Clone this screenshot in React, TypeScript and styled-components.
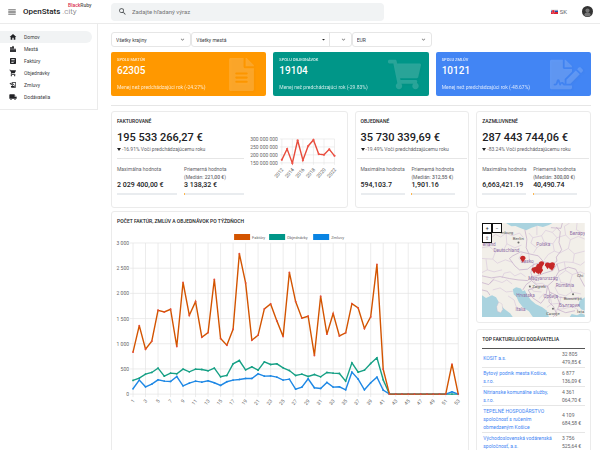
import React from "react";
import styled, { createGlobalStyle } from "styled-components";
import {
  MdMenu,
  MdSearch,
  MdHome,
  MdLocationCity,
  MdArticle,
  MdShoppingCart,
  MdHistoryEdu,
  MdLocalShipping,
  MdExpandMore,
  MdArrowDropDown,
} from "react-icons/md";
import { FaFileAlt, FaShoppingCart, FaFileSignature } from "react-icons/fa";

const GlobalStyle = createGlobalStyle`
  *, *::before, *::after { box-sizing: border-box; }
  body {
    margin: 0;
    background: #fff;
    color: #3c4043;
    font-family: Roboto, "Liberation Sans", sans-serif;
    font-size: 5px;
    line-height: 8px;
  }
  a { text-decoration: none; }
  button, input, select { font: inherit; color: inherit; margin: 0; padding: 0; border: 0; background: none; }
  h1, h2, p, ul { margin: 0; padding: 0; }
`;

const Page = styled.div`
  height: 100vh;
  display: flex;
  flex-direction: column;
`;

const Header = styled.header`
  flex: none;
  height: 24px;
  display: flex;
  align-items: center;
  padding: 0 7px;
  border-bottom: 1px solid #ebebeb;
`;

const IconButton = styled.button`
  display: flex;
  width: 10px;
  font-size: 10px;
  color: #333;
`;

const Brand = styled.a`
  position: relative;
  width: 88px;
  margin-left: 6px;
  color: #202124;
  font-size: 8px;
  line-height: 10px;
  font-weight: 500;
`;

const BrandLight = styled.span`
  font-weight: 300;
  color: #5f6368;
`;

const BrandTag = styled.span<{ $tone?: string }>`
  color: ${(p) => p.$tone || "#555"};
`;

const BrandBadge = styled.span`
  position: absolute;
  left: 45px;
  top: -5px;
  font-size: 5px;
  line-height: 6px;
  font-weight: 500;
`;

const Search = styled.label`
  flex: 0 1 273px;
  height: 18px;
  display: flex;
  align-items: center;
  gap: 5px;
  padding: 0 7px;
  border-radius: 4px;
  background: #f1f3f4;
  color: #3c4043;
  font-size: 6px;
  svg { font-size: 9px; flex: none; }
`;

const SearchInput = styled.input`
  flex: 1;
  min-width: 0;
  outline: 0;
  &::placeholder { color: #757575; opacity: 1; }
`;

const HeaderEnd = styled.div`
  margin-left: auto;
  display: flex;
  align-items: center;
`;

const Language = styled.button`
  display: flex;
  align-items: center;
  gap: 2px;
  margin-right: 15px;
  font-size: 6px;
  color: #5f6368;
`;

const Avatar = styled.button`
  width: 11px;
  height: 11px;
  display: block;
  svg { display: block; }
`;

const Body = styled.div`
  flex: 1;
  min-height: 0;
  display: flex;
  align-items: flex-start;
`;

const Sidebar = styled.nav`
  flex: none;
  width: 98px;
  padding: 7px 5px 6px 0;
  border-right: 1px solid #ebebeb;
  border-bottom: 1px solid #ebebeb;
`;

const NavItem = styled.a<{ $active?: boolean }>`
  display: flex;
  align-items: center;
  gap: 7px;
  height: 12px;
  padding-left: 9px;
  border-radius: 0 6px 6px 0;
  background: ${(p) => (p.$active ? "#f1f3f4" : "transparent")};
  color: #3c4043;
  svg { font-size: 8px; color: #202124; }
`;

const Main = styled.main`
  flex: 1;
  min-width: 0;
  height: 100%;
  overflow: auto;
  scrollbar-width: none;
  padding: 8px 9px 0 13px;
`;

const Filters = styled.div`
  display: grid;
  grid-template-columns: 1fr 2fr 1fr;
  max-width: 321px;
`;

const Field = styled.div`
  height: 15px;
  display: grid;
  grid-template-columns: 1fr auto;
  align-items: center;
  border: 1px solid #e6e6e6;
  border-radius: 3px;
  padding: 0 4px;
  color: #3c4043;
  select {
    grid-area: 1 / 1 / 2 / 3;
    width: 100%;
    appearance: none;
    outline: 0;
  }
`;

const Arrows = styled.span<{ $divided?: boolean }>`
  grid-area: 1 / 2 / 2 / 3;
  display: flex;
  align-items: center;
  gap: 10px;
  height: 13px;
  color: #777;
  pointer-events: none;
  svg { font-size: 7px; }
  svg:first-child { color: ${(p) => (p.$divided ? "#222" : "#777")}; }
`;

const Divider = styled.span`
  align-self: stretch;
  margin-left: -8px;
  border-left: 1px solid #e6e6e6;
`;

const Totals = styled.section`
  display: grid;
  grid-template-columns: repeat(3, minmax(0, 1fr));
  gap: 7px;
  margin-top: 5px;
`;

const TotalCard = styled.article<{ $color: string }>`
  display: flex;
  justify-content: space-between;
  align-items: center;
  height: 44px;
  padding: 0 6px;
  border-radius: 2px;
  background: ${(p) => p.$color};
  color: #fff;
`;

const TotalText = styled.div`
  display: flex;
  flex-direction: column;
  white-space: nowrap;
`;

const TotalTitle = styled.h2`
  font-size: 4px;
  line-height: 6px;
  font-weight: 500;
  opacity: 0.85;
`;

const TotalNumber = styled.strong`
  font-size: 10px;
  line-height: 16px;
  font-weight: 500;
`;

const TotalNote = styled.span`
  margin-top: 4px;
  line-height: 8px;
  opacity: 0.8;
`;

const TotalIcon = styled.span`
  display: flex;
  justify-content: center;
  flex: none;
  width: 37px;
  color: rgba(255, 255, 255, 0.16);
  filter: drop-shadow(1px 1px 1px rgba(0, 0, 0, 0.15));
  svg { width: auto; height: 33px; }
`;

const Rule = styled.hr`
  margin: 9px 0 5px;
  border: 0;
  border-top: 1px solid #e6e6e6;
`;

const Dashboard = styled.section`
  display: grid;
  grid-template-columns: repeat(4, minmax(0, 1fr));
  column-gap: 7px;
  row-gap: 3px;
`;

const Card = styled.article<{ $span?: number }>`
  grid-column: span ${(p) => p.$span || 1};
  border: 1px solid #ebebeb;
  border-radius: 3px;
  padding: 5px 5px;
  background: #fff;
`;

const CardTitle = styled.h2`
  font-size: 5px;
  line-height: 8px;
  font-weight: 500;
  color: #202124;
  white-space: nowrap;
`;

const SummaryCardBox = styled(Card)`
  padding-bottom: 12px;
`;

const SummaryBody = styled.div`
  display: flex;
  gap: 8px;
`;

const Summary = styled.div<{ $wide?: boolean }>`
  flex: ${(p) => (p.$wide ? "0 1 127px" : "1")};
  min-width: 0;
  white-space: nowrap;
`;

const Amount = styled.p`
  margin-top: 5px;
  font-size: 11px;
  line-height: 15px;
  font-weight: 500;
  color: #202124;
`;

const Change = styled.p`
  display: flex;
  align-items: center;
  gap: 1px;
  color: #5f6368;
  &::before {
    content: "";
    border: 2px solid transparent;
    border-top: 3px solid #222;
    border-bottom: 0;
  }
`;

const SummaryRule = styled.hr<{ $wide?: boolean }>`
  margin: 5px ${(p) => (p.$wide ? "0" : "-4px")} 5px;
  border: 0;
  border-top: 1px solid #e6e6e6;
`;

const Stats = styled.div<{ $wide?: boolean }>`
  display: grid;
  grid-template-columns: repeat(2, minmax(0, 1fr));
  gap: 7px;
  margin-right: ${(p) => (p.$wide ? "0" : "8px")};
`;

const Stat = styled.div`
  display: grid;
  grid-template-rows: 9px 7px 10px 5px;
  align-items: center;
  color: #5f6368;
`;

const Median = styled.span`
  b { font-weight: 500; }
`;

const StatValue = styled.strong`
  font-size: 7px;
  font-weight: 500;
  color: #202124;
`;

const Meter = styled.span<{ $filled?: boolean }>`
  align-self: end;
  height: 2px;
  border-left: 1px solid ${(p) => (p.$filled ? "#ffb74d" : "#e9ecef")};
  background: #e9ecef;
`;

const TrendBox = styled.div`
  flex: 1;
  min-width: 0;
  padding: 11px 2px 0 0;
  svg { display: block; width: 100%; height: auto; overflow: visible; }
`;

const ChartCard = styled(Card)`
  min-height: 255px;
  svg { display: block; width: 100%; height: auto; overflow: visible; }
`;

const Side = styled.div`
  display: flex;
  flex-direction: column;
  gap: 6px;
`;

const MapCard = styled(Card)`
  padding: 11px 5px 5px;
`;

const MapFrame = styled.div`
  position: relative;
  overflow: hidden;
  > svg { display: block; width: 100%; height: auto; }
`;

const MapControls = styled.div`
  position: absolute;
  left: 0;
  top: 0;
  display: grid;
  grid-template-columns: 10px 10px;
`;

const MapButton = styled.button`
  height: 10px;
  border: 1px solid #111;
  background: #fff;
  color: #222;
  line-height: 8px;
  text-align: center;
`;

const SupplierTable = styled.table`
  width: 100%;
  margin-top: 5px;
  border-collapse: collapse;
  border-top: 1px solid #555;
  td {
    padding: 1px;
    border-bottom: 1px solid #e6e6e6;
    color: #5f6368;
  }
  td:first-child { padding-right: 6px; }
  td:last-child { width: 24px; }
  a { color: #4285f4; }
`;

const nav = [
  { label: "Domov", icon: <MdHome />, active: true },
  { label: "Mestá", icon: <MdLocationCity /> },
  { label: "Faktúry", icon: <MdArticle /> },
  { label: "Objednávky", icon: <MdShoppingCart /> },
  { label: "Zmluvy", icon: <MdHistoryEdu /> },
  { label: "Dodávatelia", icon: <MdLocalShipping /> },
];

const totals = [
  { title: "SPOLU FAKTÚR", value: "62305", note: "Menej než predchádzajúci rok (-24.27%)", color: "#ff9800", icon: <FaFileAlt /> },
  { title: "SPOLU OBJEDNÁVOK", value: "19104", note: "Menej než predchádzajúci rok (-29.83%)", color: "#009688", icon: <FaShoppingCart /> },
  { title: "SPOLU ZMLÚV", value: "10121", note: "Menej než predchádzajúci rok (-48.67%)", color: "#4285f4", icon: <FaFileSignature /> },
];

const suppliers = [
  ["KOSIT a.s.", "32 805 479,85\u00a0€"],
  ["Bytový podnik mesta Košice, s.r.o.", "6 877 136,09\u00a0€"],
  ["Nitrianske komunálne služby, s.r.o.", "4 361 064,70\u00a0€"],
  ["TEPELNÉ HOSPODÁRSTVO spoločnosť s ručením obmedzeným Košice", "4 109 684,58\u00a0€"],
  ["Východoslovenská vodárenská spoločnosť, a.s.", "3 756 525,64\u00a0€"],
];

const idle = Array(10).fill(0);
const series = [
  {
    name: "Objednávky",
    color: "#16a085",
    values: [271, 317, 397, 430, 515, 357, 416, 403, 496, 443, 496, 489, 463, 515, 344, 370, 601, 667, 482, 542, 476, 641, 588, 601, 522, 469, 370, 397, 350, 390, 344, 430, 416, 410, 258, 621, 436, 476, 608, 720, 284, ...idle, 0, 0],
  },
  {
    name: "Zmluvy",
    color: "#1e88e5",
    values: [106, 278, 145, 198, 284, 258, 251, 350, 165, 218, 258, 238, 264, 225, 172, 245, 278, 291, 311, 311, 403, 357, 363, 337, 278, 297, 99, 139, 304, 126, 112, 231, 139, 145, 86, 436, 297, 86, 225, 337, 79, ...idle, 46, 0],
  },
  {
    name: "Faktúry",
    color: "#d35400",
    values: [833, 1361, 892, 1050, 1665, 1632, 1685, 945, 2220, 1566, 1837, 1130, 1222, 2280, 1103, 971, 1288, 2789, 2207, 1070, 1170, 1692, 1791, 1454, 1143, 2418, 1837, 1507, 1546, 767, 1943, 1190, 1600, 1156, 1216, 1797, 1711, 1302, 1533, 2577, 496, ...idle, 595, 0],
  },
];

const trend = [169, 237, 148, 292, 167, 256, 294, 205, 201, 235, 194];

const ChartText = styled.text<{ $size?: number }>`
  font-size: ${(p) => p.$size || 5}px;
  fill: #666;
`;

function WeeklyChart() {
  const x = (week: number) => 16 + (week - 1) * 6.25;
  const y = (v: number) => 169 - (v / 3000) * 151;
  const weeks = Array.from({ length: 27 }, (_, i) => i * 2 + 1);
  const legend = [
    { name: "Faktúry", color: "#d35400", x: 117 },
    { name: "Objednávky", color: "#009688", x: 152 },
    { name: "Zmluvy", color: "#0984e3", x: 196 },
  ];
  return (
    <svg viewBox="0 0 346 184" role="img" aria-label="Počet faktúr, zmlúv a objednávok po týždňoch">
      {legend.map((l) => (
        <g key={l.name}>
          <rect x={l.x} y="9" width="16" height="6" fill={l.color} />
          <ChartText $size={4} x={l.x + 18} y="14">{l.name}</ChartText>
        </g>
      ))}
      {[0, 500, 1000, 1500, 2000, 2500, 3000].map((v) => (
        <g key={v}>
          <line x1="13" x2="341" y1={y(v)} y2={y(v)} stroke="#e4e4e4" strokeWidth="0.7" />
          <ChartText x="12" y={y(v) + 2} textAnchor="end">{v >= 1000 ? `${v / 1000 | 0} ${String(v % 1000).padStart(3, "0")}` : v}</ChartText>
        </g>
      ))}
      {weeks.map((w) => (
        <g key={w}>
          <line x1={x(w)} x2={x(w)} y1="18" y2="172" stroke="#e4e4e4" strokeWidth="0.7" />
          <ChartText textAnchor="end" transform={`translate(${x(w) + 2} 176) rotate(-50)`}>{w}</ChartText>
        </g>
      ))}
      {series.map((s) => (
        <g key={s.name}>
          <polyline points={s.values.map((v, i) => `${x(i + 1)},${y(v)}`).join(" ")} fill="none" stroke={s.color} strokeWidth="1.4" />
          {s.values.map((v, i) => (
            <circle key={i} cx={x(i + 1)} cy={y(v)} r="0.9" fill={s.name === "Faktúry" ? "#e74c3c" : s.color} />
          ))}
        </g>
      ))}
    </svg>
  );
}

function TrendChart() {
  const x = (i: number) => 30 + i * 5.3;
  const y = (v: number) => 27 - ((v - 150) / 150) * 24;
  return (
    <svg viewBox="0 0 88 46" role="img" aria-label="Fakturované podľa rokov">
      {[150, 200, 250, 300].map((v) => (
        <g key={v}>
          <line x1="28" x2="83" y1={y(v)} y2={y(v)} stroke="#e4e4e4" strokeWidth="0.6" />
          <ChartText x="26" y={y(v) + 2} textAnchor="end">{`${v} 000 000`}</ChartText>
        </g>
      ))}
      {[0, 2, 4, 6, 8, 10].map((i) => (
        <g key={i}>
          <line x1={x(i)} x2={x(i)} y1="3" y2="29" stroke="#e4e4e4" strokeWidth="0.6" />
          <ChartText textAnchor="end" transform={`translate(${x(i) + 2} 34) rotate(-50)`}>{2012 + i}</ChartText>
        </g>
      ))}
      <polyline points={trend.map((v, i) => `${x(i)},${y(v)}`).join(" ")} fill="none" stroke="#e74c3c" strokeWidth="1.4" />
      {trend.map((v, i) => (
        <circle key={i} cx={x(i)} cy={y(v)} r="1.1" fill="#f0544a" />
      ))}
    </svg>
  );
}

const pins = [[122, 118], [156, 152], [163, 150], [168, 154], [172, 145], [178, 134], [174, 154], [170, 142], [196, 138], [204, 140], [209, 143], [210, 137]];

const MapLabel = styled.text<{ $city?: boolean }>`
  font-size: ${(p) => (p.$city ? 13 : 14)}px;
  fill: ${(p) => (p.$city ? "#555" : "#9070a6")};
`;

function EuropeMap() {
  return (
    <svg viewBox="0 0 307 281" role="img" aria-label="Mapa">
      <rect width="307" height="281" fill="#f2efe9" />
      <g fill="#aad3df">
        <path d="M72 0 L88 10 L100 9 L116 16 L132 22 L148 14 L166 8 L182 12 L200 6 L210 0Z" />
        <path d="M92 198 L102 192 L116 196 L122 204 L128 201 L134 214 L146 230 L160 242 L180 252 L194 262 L200 281 L152 281 L140 264 L122 252 L110 236 L103 220 L95 214Z" />
        <path d="M0 216 L12 224 L30 216 L42 222 L52 240 L66 256 L84 270 L92 281 L0 281Z" />
        <path d="M307 222 L292 232 L288 246 L296 258 L307 262Z" />
        <path d="M262 281 L268 272 L284 276 L296 270 L307 274 L307 281Z" />
      </g>
      <path d="M50 236 L60 242 L62 258 L56 268 L46 264 L44 250Z" fill="#f2efe9" stroke="#c8b2cc" />
      <g fill="none" stroke="#d9c9dc" strokeWidth="2">
        <path d="M0 40 L26 46 L40 34 L56 42 L72 30 L90 38 L112 30 L124 44 M26 46 L22 70 L40 86 L32 108 L46 120 M40 86 L64 82 L74 62 L72 30 M74 62 L98 74 L118 66 M46 120 L70 110 L92 118 M0 74 L22 70 M0 106 L32 108 M12 108 L16 140 L0 148" />
        <path d="M140 30 L152 44 L146 60 L164 74 L154 90 M152 44 L178 38 L190 22 L210 28 L222 16 M178 38 L186 58 L164 74 M186 58 L212 62 L224 44 L210 28 M212 62 L216 84 L198 94 L186 110 M224 44 L250 36 L264 50 L288 40 L307 48 M250 36 L246 10 L262 0 M264 50 L258 76 L276 92 L307 84 M258 76 L232 90 L216 84 M276 92 L272 118 L294 126 L307 116" />
        <path d="M224 122 L246 116 L272 118 M246 116 L250 142 L270 154 L294 146 L307 152 M250 142 L228 158 L236 178 L262 182 L270 154 M262 182 L268 206 L296 212 M236 178 L218 192 L228 212 L250 218 L268 206 M60 164 L66 150 L84 146 L98 158 L116 150 L130 160 M16 140 L36 146 L60 140 M24 180 L36 170 L60 178 L74 170 L90 182 M32 200 L54 194 L72 206 L92 204 M78 218 L96 230 L102 250 L122 262 M120 90 L110 106 L128 120 L142 112 L158 124 M142 112 L140 94" />
        <path d="M150 166 L162 182 L180 180 L194 190 M140 186 L154 204 L178 206 M170 226 L184 212 L204 218 L208 242 L194 252 M208 242 L232 240 L246 256 L270 250 L286 258 M232 240 L236 218 M220 281 L224 258 L246 256 M164 8 L164 36 M284 0 L282 20 L300 30" />
      </g>
      <g fill="none" stroke="#c2a8c8" strokeWidth="2">
        <path d="M128 20 L134 48 L132 74 L140 92 L116 86 L92 98 L82 106 L98 128 L112 140 L136 138 L154 124 L184 116 L168 98 L140 92 M154 124 L146 148 L150 160 L136 172 L108 170 L82 166 L54 160 L28 164 L0 158" />
        <path d="M184 116 L212 122 L224 114 L222 102 L238 80 L230 58 L234 26 L222 12 M224 122 L212 142 L186 150 L164 158 L150 160 L148 172 L166 188 L196 188 L214 172 L230 144 L224 122 M196 188 L202 206 L222 216 L232 222 L264 226 L290 222 M148 172 L132 184 L122 200 M166 188 L152 196 L138 200 L152 224 L176 240 L190 222 L196 188 M202 206 L200 236 L214 250 L222 270 L212 281 M222 216 L232 240 L226 258 L250 268 L278 262 M230 144 L258 132 L280 138 L294 166 L307 190" />
        <path d="M0 178 L20 184 L36 166 M0 200 L16 204 L24 216 M0 20 L22 18 L36 0 M206 14 L236 16 L240 0" />
      </g>
      <g fill="#6a6a6a">
        {[[109, 58], [143, 190], [272, 213], [212, 256]].map(([cx, cy]) => (
          <circle key={cx} cx={cx} cy={cy} r="3" />
        ))}
      </g>
      <MapLabel $city x="56" y="33">mburg</MapLabel>
      <MapLabel $city x="92" y="50">Berlin</MapLabel>
      <MapLabel x="162" y="70">Polska</MapLabel>
      <MapLabel x="262" y="36">Белару</MapLabel>
      <MapLabel x="34" y="87">Deutschland</MapLabel>
      <MapLabel x="2" y="68">erland</MapLabel>
      <MapLabel x="116" y="120">Česko</MapLabel>
      <MapLabel x="138" y="170">Magyarország</MapLabel>
      <MapLabel $city x="150" y="195">Zagreb</MapLabel>
      <MapLabel x="102" y="220">Hrvatska</MapLabel>
      <MapLabel x="220" y="191">România</MapLabel>
      <MapLabel x="184" y="225">Србија</MapLabel>
      <MapLabel $city x="244" y="231">București</MapLabel>
      <MapLabel x="230" y="250">България</MapLabel>
      <MapLabel $city x="192" y="275">Скопје</MapLabel>
      <MapLabel x="100" y="262">Italia</MapLabel>
      <MapLabel $city x="284" y="161">Chi</MapLabel>
      <MapLabel $city x="284" y="268">İsta</MapLabel>
      {pins.map(([px, py], i) => (
        <path key={i} d={`M${px} ${py} l-8 -12 a8 8 0 1 1 16 0z`} fill="#c62828" />
      ))}
    </svg>
  );
}

interface SummaryProps {
  wide?: boolean;
  title: string;
  amount: string;
  change: string;
  max: string;
  median: string;
  average: string;
}

function SummaryCard({ wide, title, amount, change, max, median, average }: SummaryProps) {
  return (
    <SummaryCardBox $span={wide ? 2 : 1}>
      <CardTitle>{title}</CardTitle>
      <SummaryBody>
        <Summary $wide={wide}>
          <Amount>{amount}</Amount>
          <Change>{change} Voči predchádzajúcemu roku</Change>
          <SummaryRule $wide={wide} />
          <Stats $wide={wide}>
            <Stat>
              <span>Maximálna hodnota</span>
              <span />
              <StatValue>{max}</StatValue>
              <Meter />
            </Stat>
            <Stat>
              <span>Priemerná hodnota</span>
              <Median>(Medián: <b>{median}</b>)</Median>
              <StatValue>{average}</StatValue>
              <Meter $filled />
            </Stat>
          </Stats>
        </Summary>
        {wide && <TrendBox><TrendChart /></TrendBox>}
      </SummaryBody>
    </SummaryCardBox>
  );
}

export default function App() {
  return (
    <Page>
      <GlobalStyle />
      <Header>
        <IconButton aria-label="Menu"><MdMenu /></IconButton>
        <Brand href="#">
          OpenStats <BrandLight>.city</BrandLight>
          <BrandBadge><BrandTag $tone="#d9304f">Black</BrandTag><BrandTag>Ruby</BrandTag></BrandBadge>
        </Brand>
        <Search>
          <MdSearch />
          <SearchInput type="text" placeholder="Zadajte hľadaný výraz" aria-label="Zadajte hľadaný výraz" />
        </Search>
        <HeaderEnd>
          <Language>
            <svg width="7" height="5" viewBox="0 0 14 10" aria-hidden="true">
              <rect width="14" height="10" fill="#f0f0f0" />
              <rect y="3" width="14" height="4" fill="#2450a4" />
              <rect y="6" width="14" height="4" fill="#dd2233" />
              <path d="M2 2h5v4q0 2-2.500 3Q2 8 2 6z" fill="#dd2233" stroke="#fff" strokeWidth="0.6" />
            </svg>
            SK
          </Language>
          <Avatar aria-label="Profil">
            <svg width="11" height="11" viewBox="0 0 24 24" aria-hidden="true">
              <circle cx="12" cy="12" r="12" fill="#333" />
              <circle cx="12" cy="10" r="4.500" fill="#777" />
              <path d="M5 20q0-6 7-6t7 6q-3 3-7 3t-7-3z" fill="#777" />
            </svg>
          </Avatar>
        </HeaderEnd>
      </Header>
      <Body>
        <Sidebar>
          {nav.map((n) => (
            <NavItem key={n.label} href="#" $active={n.active}>{n.icon}{n.label}</NavItem>
          ))}
        </Sidebar>
        <Main>
          <Filters>
            <Field>
              <select aria-label="Krajina"><option>Všetky krajiny</option></select>
              <Arrows><MdExpandMore /></Arrows>
            </Field>
            <Field>
              <select aria-label="Mesto"><option>Všetky mestá</option></select>
              <Arrows $divided><MdArrowDropDown /><Divider /><MdExpandMore /></Arrows>
            </Field>
            <Field>
              <select aria-label="Mena"><option>EUR</option></select>
              <Arrows><MdExpandMore /></Arrows>
            </Field>
          </Filters>
          <Totals>
            {totals.map((t) => (
              <TotalCard key={t.title} $color={t.color}>
                <TotalText>
                  <TotalTitle>{t.title}</TotalTitle>
                  <TotalNumber>{t.value}</TotalNumber>
                  <TotalNote>{t.note}</TotalNote>
                </TotalText>
                <TotalIcon>{t.icon}</TotalIcon>
              </TotalCard>
            ))}
          </Totals>
          <Rule />
          <Dashboard>
            <SummaryCard wide title="FAKTUROVANÉ" amount="195 533 266,27 €" change="-16.91%" max="2 029 400,00 €" median="221,00 €" average="3 138,32 €" />
            <SummaryCard title="OBJEDNANÉ" amount="35 730 339,69 €" change="-19.49%" max="594,103.7" median="312,55 €" average="1,901.16" />
            <SummaryCard title="ZAZMLUVNENÉ" amount="287 443 744,06 €" change="-83.24%" max="6,663,421.19" median="300,00 €" average="40,490.74" />
            <ChartCard $span={3}>
              <CardTitle>POČET FAKTÚR, ZMLÚV A OBJEDNÁVOK PO TÝŽDŇOCH</CardTitle>
              <WeeklyChart />
            </ChartCard>
            <Side>
              <MapCard>
                <MapFrame>
                  <EuropeMap />
                  <MapControls>
                    <MapButton aria-label="Priblížiť">+</MapButton>
                    <MapButton aria-label="Oddialiť">−</MapButton>
                    <MapButton aria-label="Obnoviť">⇧</MapButton>
                  </MapControls>
                </MapFrame>
              </MapCard>
              <Card>
                <CardTitle>TOP FAKTURUJÚCI DODÁVATELIA</CardTitle>
                <SupplierTable>
                  <tbody>
                    {suppliers.map(([name, sum]) => (
                      <tr key={name}>
                        <td><a href="#">{name}</a></td>
                        <td>{sum}</td>
                      </tr>
                    ))}
                  </tbody>
                </SupplierTable>
              </Card>
            </Side>
          </Dashboard>
        </Main>
      </Body>
    </Page>
  );
}
